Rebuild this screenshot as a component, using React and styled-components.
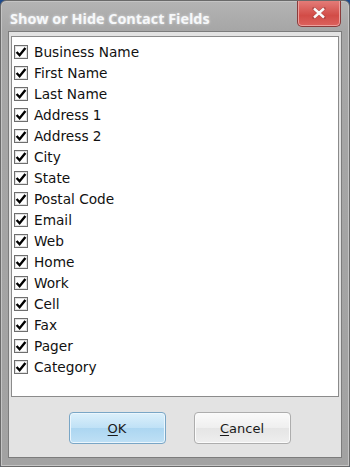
import React from "react";
import styled, { createGlobalStyle } from "styled-components";

const Global = createGlobalStyle`
  html, body { margin: 0; padding: 0; background: #1d4a8c; }
  body { width: 350px; height: 467px; overflow: hidden; }
`;

const Window = styled.div`
  position: relative;
  box-sizing: border-box;
  width: 350px;
  height: 467px;
  border: 1px solid #6a6a6a;
  border-radius: 6px 6px 0 0;
  background: linear-gradient(#b4b4b4 0px, #a6a6a6 30px, #a2a2a2 100%);
  box-shadow: inset 0 0 0 1px #c4c4c4;
  display: flex;
  flex-direction: column;
  padding: 0 7px 8px 7px;
  font-family: "DejaVu Sans", Tahoma, sans-serif;
  overflow: hidden;
`;

const TitleBar = styled.div`
  height: 30px;
  display: flex;
  align-items: flex-start;
  justify-content: space-between;
`;

const Title = styled.div`
  margin-top: 8px;
  margin-left: 2px;
  font-family: "Open Sans", "DejaVu Sans", sans-serif;
  font-weight: 700;
  font-size: 14.4px;
  color: #f6f8fa;
  text-shadow: 0 0 3px rgba(235, 235, 235, 0.8);
`;

const CloseButton = styled.div`
  width: 44px;
  height: 27px;
  margin-right: 1px;
  margin-top: -1px;
  box-sizing: border-box;
  border: 1px solid #8a3b3b;
  border-top: none;
  border-radius: 0 0 5px 5px;
  background: linear-gradient(#e57f7b, #d24c47 60%, #dc625d);
  box-shadow: inset 0 0 0 1px #ee9f9c;
  display: flex;
  align-items: center;
  justify-content: center;
`;

const Client = styled.div`
  flex: 1;
  box-sizing: border-box;
  border: 1px solid #7c7c7c;
  background: #e3e3e3;
  display: flex;
  flex-direction: column;
  padding: 4px 2px 0 2px;
`;

const ListBox = styled.div`
  box-sizing: border-box;
  height: 361px;
  background: #ffffff;
  border: 1px solid #8b8b8b;
  padding: 4px 0 0 2px;
  display: flex;
  flex-direction: column;
`;

const Row = styled.label`
  height: 21px;
  display: flex;
  align-items: center;
  gap: 6px;
  font-family: "DejaVu Sans", Tahoma, sans-serif;
  font-size: 13.7px;
  color: #111111;
`;

const Box = styled.span`
  width: 14px;
  height: 14px;
  box-sizing: border-box;
  border: 1px solid #6e6e6e;
  background: #fff;
  box-shadow: inset 0 0 0 1px #e2e2e2;
  display: flex;
  align-items: center;
  justify-content: center;
`;

const ButtonRow = styled.div`
  flex: 1;
  display: flex;
  justify-content: center;
  align-items: flex-start;
  gap: 28px;
  padding-top: 15px;
  padding-left: 9px;
`;

const Button = styled.div`
  width: 97px;
  height: 32px;
  box-sizing: border-box;
  border-radius: 4px;
  border: 1px solid ${(p) => (p.$focused ? "#79a6c6" : "#adadad")};
  background: ${(p) =>
    p.$focused
      ? "linear-gradient(#dcf0fb, #bfe1f6 50%, #acd6f1 51%, #bfe0f5)"
      : "linear-gradient(#fafafa, #efefef 50%, #e5e5e5 51%, #eeeeee)"};
  box-shadow: inset 0 0 0 1px ${(p) => (p.$focused ? "#ebf6fd" : "#fbfbfb")};
  display: flex;
  align-items: center;
  justify-content: center;
  font-family: "DejaVu Sans", Tahoma, sans-serif;
  font-size: 13px;
  color: #1a1a1a;
  u { text-decoration: underline; text-underline-offset: 2px; }
`;

const Check = () => (
  <svg width="12" height="12" viewBox="0 0 12 12">
    <path d="M1.6 6 L4.6 9.2 L10.4 2" fill="none" stroke="#000" strokeWidth="2.4" />
  </svg>
);

const fields = [
  "Business Name",
  "First Name",
  "Last Name",
  "Address 1",
  "Address 2",
  "City",
  "State",
  "Postal Code",
  "Email",
  "Web",
  "Home",
  "Work",
  "Cell",
  "Fax",
  "Pager",
  "Category",
];

export default function App() {
  return (
    <>
      <Global />
      <Window>
        <TitleBar>
          <Title>Show or Hide Contact Fields</Title>
          <CloseButton>
            <svg width="14" height="12" viewBox="0 0 14 12">
              <path d="M2 1.5 L12 10.5 M12 1.5 L2 10.5" stroke="#8c3a38" strokeWidth="3.6" strokeLinecap="round" opacity="0.5" />
              <path d="M2 1.5 L12 10.5 M12 1.5 L2 10.5" stroke="#fafafa" strokeWidth="2.4" />
            </svg>
          </CloseButton>
        </TitleBar>
        <Client>
          <ListBox>
            {fields.map((f) => (
              <Row key={f}>
                <Box>
                  <Check />
                </Box>
                {f}
              </Row>
            ))}
          </ListBox>
          <ButtonRow>
            <Button $focused>
              <span><u>O</u>K</span>
            </Button>
            <Button>
              <span><u>C</u>ancel</span>
            </Button>
          </ButtonRow>
        </Client>
      </Window>
    </>
  );
}
